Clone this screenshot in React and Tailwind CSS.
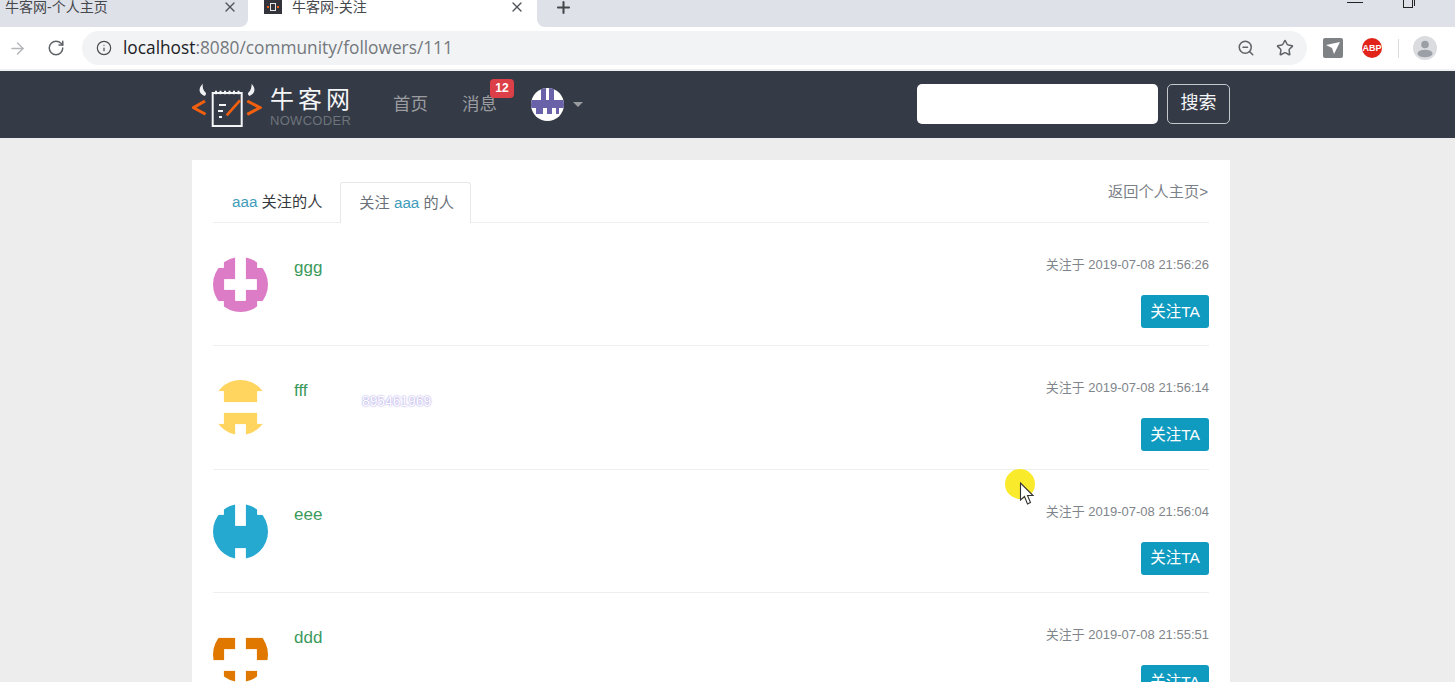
import React from "react";
import { ArrowRight, RotateCw, Info, ZoomOut, Star, X, Plus } from "lucide-react";

const CJK = "font-['Liberation_Sans','Noto_Sans_CJK_SC',sans-serif]";

function Identicon({ rows, color, size = 55, id }) {
  const c = size / 5;
  return (
    <svg width={size} height={size} viewBox={`0 0 ${size} ${size}`} className="block shrink-0">
      <clipPath id={id}><circle cx={size / 2} cy={size / 2} r={size / 2} /></clipPath>
      <g clipPath={`url(#${id})`} fill={color}>
        {rows.map((r, y) =>
          r.split("").map((v, x) =>
            v === "1" ? <rect key={x + "-" + y} x={x * c - 0.1} y={y * c - 0.1} width={c + 0.2} height={c + 0.2} /> : null
          )
        )}
      </g>
    </svg>
  );
}

function NavAvatar() {
  return (
    <svg width="33" height="33" viewBox="0 0 33 33" className="block shrink-0">
      <clipPath id="nav"><circle cx="16.500" cy="16.500" r="16.500" /></clipPath>
      <circle cx="16.500" cy="16.500" r="16.500" fill="#fff" />
      <g clipPath="url(#nav)" fill="#6a62a8">
        <rect x="10" y="0" width="5" height="13" />
        <rect x="18" y="0" width="5" height="13" />
        <rect x="0" y="12" width="33" height="8" />
        <rect x="5" y="20" width="7" height="6" />
        <rect x="16" y="20" width="5" height="6" />
        <rect x="25" y="20" width="3" height="6" />
      </g>
    </svg>
  );
}

function Logo() {
  return (
    <svg width="70" height="48" viewBox="0 0 70 48" className="block shrink-0" fill="none">
      <path d="M10.700 2.700 C6.500 7 6 12 12.500 15 C14.500 13.500 14.500 12 13 11 C11 9 10.500 6 10.700 2.700 Z" fill="#eef0f2" />
      <path d="M59.700 2.700 C63.500 7 64 12 57.500 15 C55.500 13.500 55.500 12 57 11 C59 9 59.500 6 59.700 2.700 Z" fill="#eef0f2" />
      <path d="M13 20 L1.500 26.700 L13.500 33.300 M55.300 20 L68 26.700 L55.300 33.300" stroke="#f2600f" strokeWidth="3" />
      <path d="M20.700 12 H49.700 V45 H20.700 Z" stroke="#f3f4f5" strokeWidth="2" />
      <path d="M23 11.500 H48" stroke="#f3f4f5" strokeWidth="3.500" strokeDasharray="2 2.500" />
      <path d="M34.700 34.300 L48 19.300" stroke="#f2600f" strokeWidth="2.600" />
      <path d="M27 24 H34 M26 30 H31 M27 36 H30" stroke="#f3f4f5" strokeWidth="1.800" />
    </svg>
  );
}

function Row({ name, time, avatar, color, id, children }) {
  return (
    <div className="relative h-[123.25px] border-b border-[#eeeeee] pt-[34px] flex items-start">
      <Identicon rows={avatar} color={color} id={id} />
      <div className="ml-[26px] mt-px text-[#3b9a5c] text-[17px] leading-[20px]">{name}</div>
      {children}
      <div className="ml-auto flex flex-col items-end">
        <div className="text-[13px] leading-[16px] text-[#7f858b]">关注于 {time}</div>
        <button className="mt-[22px] w-[68px] h-[33px] rounded-[3px] bg-[#0f9ac0] text-white text-[15.500px]">关注TA</button>
      </div>
    </div>
  );
}

export default function App() {
  return (
    <div className={`relative h-[682px] w-full overflow-hidden bg-[#ededed] ${CJK}`}>
      {/* tab strip */}
      <div className="flex h-[27px] bg-white text-[14px] leading-[14px] text-[#45474b]">
        <div className="w-[248px] bg-[#dee1e8] rounded-br-[8px] flex items-start pl-[5px]">
          <span>牛客网-个人主页</span>
          <X size={16} strokeWidth={2} className="ml-auto mr-[10px] text-[#50535a] -mt-px" />
        </div>
        <div className="w-[289px] flex items-start pl-[16px]">
          <div className="w-[18px] h-[14px] bg-[#33333b] flex items-center justify-center gap-px">
            <div className="w-[2px] h-[2px] bg-[#f2600f]" />
            <div className="w-[6px] h-[8px] border border-[#e8e8e8]" />
            <div className="w-[2px] h-[2px] bg-[#f2600f]" />
          </div>
          <span className="ml-[10px]">牛客网-关注</span>
          <X size={16} strokeWidth={2} className="ml-auto mr-[12px] text-[#50535a] -mt-px" />
        </div>
        <div className="flex-1 bg-[#dee1e8] rounded-bl-[8px] flex items-start pl-[17px]">
          <Plus size={19} strokeWidth={2.600} className="text-[#45474b] -mt-[2px]" />
          <div className="ml-auto mt-[2px] w-[16px] h-[1px] bg-[#222222]" />
          <div className="relative ml-[40px] mr-[42px] -mt-[2px] w-[10px] h-[10px] border border-[#222222]">
            <div className="absolute -right-[3px] top-[1px] w-[2px] h-[6px] border-r border-[#222222]" />
          </div>
        </div>
      </div>
      {/* toolbar */}
      <div className="h-[44px] bg-white flex items-center border-b-2 border-[#eef0f1]">
        <ArrowRight size={19} strokeWidth={1.800} className="ml-[8px] text-[#b4b6b9]" />
        <RotateCw size={18} strokeWidth={2} className="ml-[20px] text-[#5f6368]" />
        <div className="ml-[17px] w-[1225px] h-[34px] rounded-full bg-[#f1f3f4] flex items-center pl-[14px] pr-[13px]">
          <Info size={16} strokeWidth={1.800} className="text-[#4a4d52]" />
          <span className="ml-[11px] text-[17.300px] font-['Open_Sans',sans-serif] text-[#74787d]">
            <span className="text-[#202124]">localhost</span>:8080/community/followers/111
          </span>
          <ZoomOut size={18} strokeWidth={2} className="ml-auto text-[#5f6368]" />
          <Star size={18} strokeWidth={2} className="ml-[21px] text-[#5f6368]" />
        </div>
        <div className="ml-[16px] w-[20px] h-[20px] rounded-[2px] bg-[#7f8285] flex items-center justify-center">
          <svg width="14" height="12" viewBox="0 0 14 12"><path d="M0 3 L14 0 L8 12 L6 6 Z" fill="#fff" /></svg>
        </div>
        <div className="ml-[19px] w-[20px] h-[20px] rounded-full bg-[#e2231a] flex items-center justify-center text-white text-[9px] font-bold leading-none">ABP</div>
        <div className="ml-[16px] w-px h-[19px] bg-[#dcdcdc]" />
        <div className="ml-[14px] w-[24px] h-[24px] rounded-full bg-[#dadce0] overflow-hidden">
          <svg width="24" height="24" viewBox="0 0 24 24" fill="#9aa0a6"><circle cx="12" cy="8.500" r="3.800" /><ellipse cx="12" cy="17.500" rx="7.500" ry="3.800" /></svg>
        </div>
      </div>
      {/* navbar */}
      <div className="h-[67px] bg-[#343a46]">
        <div className="ml-[192px] w-[1038px] h-full flex items-center">
          <div className="flex w-[160px] items-center">
            <Logo />
            <div className="ml-[8px] mt-[4px] flex flex-col items-start">
              <div className="text-[24px] leading-[26px] text-[#f4f5f6] tracking-[4px] whitespace-nowrap font-['Noto_Sans_CJK_SC',sans-serif]">牛客网</div>
              <div className="mt-[3px] text-[13px] leading-[14px] text-[#6e747b] tracking-[0.300px] whitespace-nowrap">NOWCODER</div>
            </div>
          </div>
          <div className="ml-[41px] text-[17.500px] text-[#9a9c9f]">首页</div>
          <div className="relative ml-[34px] text-[17.500px] text-[#9a9c9f]">
            消息
            <span className="absolute left-[28px] -top-[12px] w-[24px] h-[19px] rounded-[4px] bg-[#dc3f48] text-white text-[12px] font-bold leading-[19px] text-center">12</span>
          </div>
          <div className="ml-[34px]">
            <NavAvatar />
          </div>
          <div className="ml-[9px] w-0 h-0 border-x-[5px] border-x-transparent border-t-[5px] border-t-[#9a9c9f]" />
          <div className="ml-auto -mt-[2px] w-[241px] h-[40px] rounded-[5px] bg-white" />
          <button className="ml-[9px] -mt-[2px] w-[63px] h-[40px] rounded-[5px] border border-[#c5c8cb] text-[#f5f6f7] text-[18px]">搜索</button>
        </div>
      </div>
      {/* card */}
      <div className="ml-[192px] mt-[22px] w-[1038px] bg-white px-[21px] pt-[22px] h-[600px]">
        <div className="flex items-end h-[41px] border-b border-[#eeeeee]">
          <div className="h-[40px] pl-[19px] pr-[18px] flex items-center text-[15.200px] text-[#35393d]">
            <span className="text-[#3f9dbb]">aaa</span>&nbsp;关注的人
          </div>
          <div className="h-[41px] -mb-px pl-[18px] pr-[16px] flex items-center text-[15.200px] text-[#6a7077] bg-white border border-b-0 border-[#e8e8e8] rounded-t-[3px]">
            关注&nbsp;<span className="text-[#3f9dbb]">aaa</span>&nbsp;的人
          </div>
          <div className="ml-auto self-start -mt-px mr-[1px] text-[15.200px] leading-[22px] text-[#7a8087]">返回个人主页&gt;</div>
        </div>
        <Row id="a1" name="ggg" time="2019-07-08 21:56:26" color="#dd7cc6" avatar={["01010", "11011", "10001", "11011", "01110"]} />
        <Row id="a2" name="fff" time="2019-07-08 21:56:14" color="#ffd45f" avatar={["11111", "01110", "00000", "01110", "11011"]}>
          <span className="absolute left-[149px] top-[47px] text-[13.800px] leading-[18px] text-white [text-shadow:0_0_2px_#7d6cd8]">895461969</span>
        </Row>
        <Row id="a3" name="eee" time="2019-07-08 21:56:04" color="#26a9d0" avatar={["01010", "11011", "11111", "11111", "11011"]} />
        <Row id="a4" name="ddd" time="2019-07-08 21:55:51" color="#e07800" avatar={["00000", "11011", "10001", "00000", "01010"]} />
      </div>
      {/* recording cursor highlight */}
      <div className="absolute left-[1005px] top-[469px] w-[30px] h-[30px] rounded-full bg-[#f9ea2c]" />
      <svg className="absolute left-[1019px] top-[482px]" width="17" height="24" viewBox="0 0 17 24">
        <path d="M1.500 1 V18 L5.500 14.500 L8.500 22 L11.500 20.500 L8.500 13.500 H14 Z" fill="#fff" stroke="#333" strokeWidth="1.100" />
      </svg>
    </div>
  );
}
